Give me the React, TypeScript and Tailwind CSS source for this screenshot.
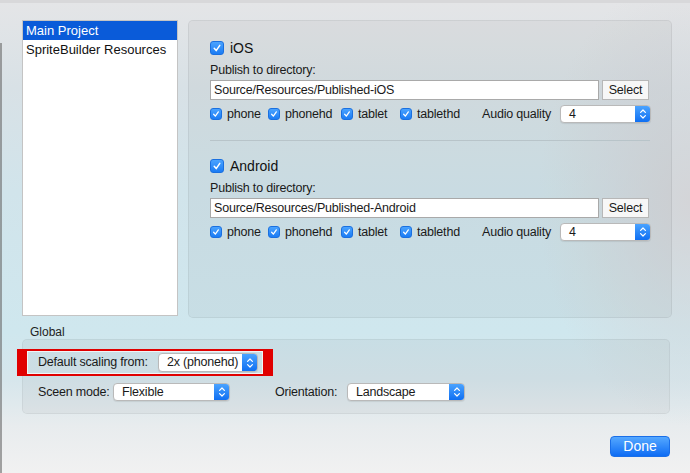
import React from 'react';

const txt = 'text-[12.5px] tracking-[-0.2px] text-[#1a1a1a] whitespace-nowrap';

function Check({ big }: { big?: boolean }) {
  const size = big ? 'w-[14px] h-[14px]' : 'w-[12px] h-[12px]';
  return (
    <div className={`${size} shrink-0 rounded-[3px] bg-[linear-gradient(to_bottom,#4aa3ff,#1b7cf4)] border border-[#1a70e0] flex items-center justify-center`}>
      <svg viewBox="0 0 12 12" className="w-full h-full">
        <polyline points="3.2,6.3 5.2,8.6 8.8,3.4" fill="none" stroke="white" strokeWidth="1.5" strokeLinecap="round" strokeLinejoin="round" />
      </svg>
    </div>
  );
}

function Popup({ value, w, h = 'h-[18px]' }: { value: string; w: string; h?: string }) {
  return (
    <div className={`${w} ${h} shrink-0 flex rounded-[4px] bg-white border border-[#b9b9b9] shadow-[0_1px_1px_rgba(0,0,0,0.08)] overflow-hidden`}>
      <div className={`flex-1 pl-[8px] flex items-center leading-none ${txt}`}>{value}</div>
      <div className="w-[15px] bg-[linear-gradient(to_bottom,#4aa3ff,#0f6ff2)] flex items-center justify-center">
        <svg viewBox="0 0 10 14" className="w-[8px] h-[12px]">
          <polyline points="2,5 5,2 8,5" fill="none" stroke="white" strokeWidth="1.5" strokeLinecap="round" strokeLinejoin="round" />
          <polyline points="2,9 5,12 8,9" fill="none" stroke="white" strokeWidth="1.5" strokeLinecap="round" strokeLinejoin="round" />
        </svg>
      </div>
    </div>
  );
}

function Platform({ name, dir }: { name: string; dir: string }) {
  const devices = [
    { label: 'phone', w: 'w-[58px]' },
    { label: 'phonehd', w: 'w-[73px]' },
    { label: 'tablet', w: 'w-[59px]' },
    { label: 'tablethd', w: 'w-[82px]' },
  ];
  return (
    <div>
      <div className="h-[16px] flex items-center gap-[6px]">
        <Check big />
        <span className="text-[14px] text-[#111]">{name}</span>
      </div>
      <div className={`mt-[6px] h-[16px] flex items-center ${txt}`}>Publish to directory:</div>
      <div className="mt-[2px] flex gap-[3px]">
        <div className={`w-[389px] h-[20px] bg-white border border-[#a9a9a9] flex items-center pl-[3px] ${txt}`}>{dir}</div>
        <div className={`w-[47px] h-[20px] bg-[#f7f7f7] border border-[#b7b7b7] flex items-center justify-center ${txt}`}>Select</div>
      </div>
      <div className="mt-[5px] h-[18px] flex items-center">
        {devices.map((d) => (
          <div key={d.label} className={`${d.w} shrink-0 flex items-center gap-[5px]`}>
            <Check />
            <span className={txt}>{d.label}</span>
          </div>
        ))}
        <span className={`w-[78px] shrink-0 ${txt}`}>Audio quality</span>
        <Popup value="4" w="w-[91px]" />
      </div>
    </div>
  );
}

export default function App() {
  return (
    <div className="relative w-[690px] h-[473px] overflow-hidden border-t-[3px] border-[#d8d8da] font-['Liberation_Sans',Arial,sans-serif] bg-[image:radial-gradient(ellipse_22%_48%_at_100%_42%,rgba(212,212,215,0.95),rgba(212,212,215,0)_100%),linear-gradient(to_bottom,#e4e5e7_0%,#d8e1e6_18%,#d1e4eb_40%,#cfe7ee_70%,#d6e6ec_80%,#e8ecee_90%,#f1f1f1_100%)]">
      <div className="absolute left-0 top-[40px] bottom-0 w-[2px] bg-[#6a6a6a]/60" />

      <div className="pl-[22px] pt-[17px]">
        <div className="flex gap-[10px]">
          <div className="w-[156px] h-[296px] bg-white border border-[#c4c4c4]">
            <div className="h-[19px] bg-[#0a5bd9] text-white text-[13px] pl-[3px] flex items-center whitespace-nowrap">Main Project</div>
            <div className="h-[19px] text-[#111] text-[13px] pl-[3px] flex items-center whitespace-nowrap">SpriteBuilder Resources</div>
          </div>
          <div className="w-[484px] h-[298px] rounded-[5px] bg-black/[0.035] border border-black/[0.06] pt-[19px] pl-[21px]">
            <Platform name="iOS" dir="Source/Resources/Published-iOS" />
            <div className="mt-[17px] w-[440px] h-px bg-[#b8c4c9]" />
            <div className="mt-[17px]">
              <Platform name="Android" dir="Source/Resources/Published-Android" />
            </div>
          </div>
        </div>

        <div className="mt-[7px] pl-[8px] h-[14px] flex items-center text-[12px] text-[#222]">Global</div>

        <div className="w-[648px] h-[75px] rounded-[5px] bg-black/[0.035] border border-black/[0.05] pt-[13px] pl-[15px]">
          <div className="h-[19px] flex items-center">
            <span className={`w-[120px] shrink-0 ${txt}`}>Default scaling from:</span>
            <Popup value="2x (phonehd)" w="w-[100px]" h="h-[19px]" />
          </div>
          <div className="mt-[11px] h-[18px] flex items-center">
            <span className={`w-[75px] shrink-0 ${txt}`}>Sceen mode:</span>
            <Popup value="Flexible" w="w-[117px]" />
            <span className={`ml-[45px] w-[72px] shrink-0 ${txt}`}>Orientation:</span>
            <Popup value="Landscape" w="w-[118px]" />
          </div>
        </div>

        <div className="w-[648px] mt-[22px] flex justify-end">
          <div className="w-[60px] h-[21px] rounded-[4px] bg-[linear-gradient(to_bottom,#55a8ff,#0d6cf4)] border border-[#1a6fe8] flex items-center justify-center text-[14px] text-white">Done</div>
        </div>
      </div>

      <div className="absolute left-[17px] top-[346px] w-[256px] h-[27px] border-x-[10px] border-y-[2px] border-[#e00000] shadow-[inset_0_0_0_1px_rgba(255,255,255,0.7)]" />
    </div>
  );
}
